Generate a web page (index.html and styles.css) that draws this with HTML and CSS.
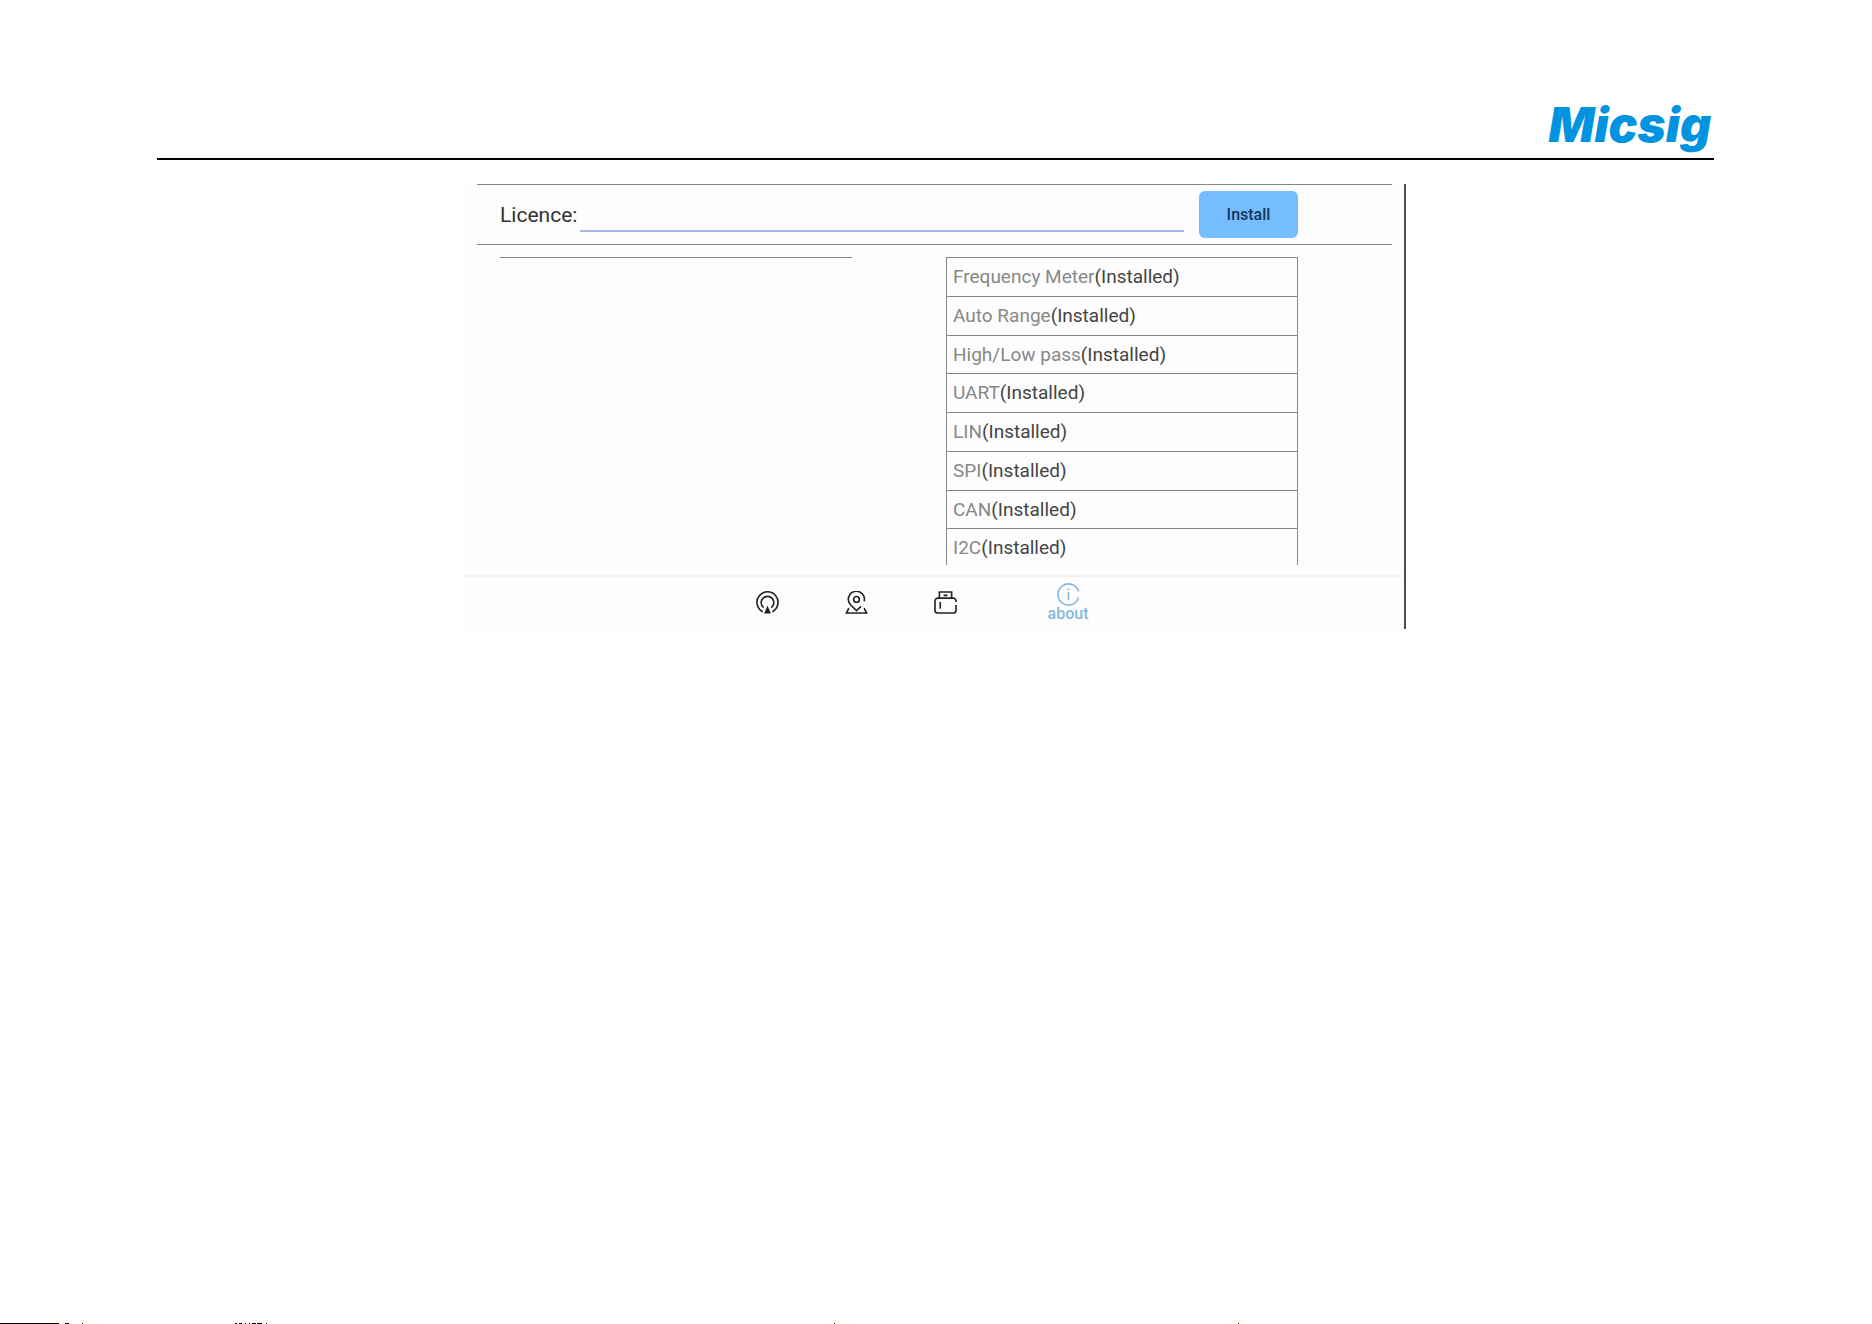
FILE: index.html
```
<!DOCTYPE html>
<html lang="en">
<head>
  <meta charset="UTF-8" />
  <title>Micsig | Licence</title>
  <meta name="viewport" content="width=device-width, initial-scale=1.0" />
  <link rel="stylesheet" href="styles.css">
</head>
<body>
  <div class="page">
    <header>
      <span class="logo">Micsig</span>
    </header>

    <main class="panel">
      <form class="licence">
        <label for="licence">Licence:</label>
        <input type="text" id="licence">
        <button type="button" class="install">Install</button>
      </form>

      <div class="columns">
        <div class="details"></div>
        <ul class="options">
          <li>Frequency Meter<span>(Installed)</span></li>
          <li>Auto Range<span>(Installed)</span></li>
          <li>High/Low pass<span>(Installed)</span></li>
          <li>UART<span>(Installed)</span></li>
          <li>LIN<span>(Installed)</span></li>
          <li>SPI<span>(Installed)</span></li>
          <li>CAN<span>(Installed)</span></li>
          <li>I2C<span>(Installed)</span></li>
        </ul>
      </div>

      <nav class="tabs">
        <button type="button" aria-label="Signal">
          <svg viewBox="0 0 24 24">
            <path d="M7 21.6A11 11 0 1 1 17 21.6" />
            <path d="M8 17.4A6.6 6.6 0 1 1 16 17.4" />
            <path d="M12 15.5L15.6 23.5H8.4z" fill="currentColor" stroke="none" />
          </svg>
        </button>
        <button type="button" aria-label="Location">
          <svg viewBox="0 0 24 24">
            <path d="M16.8 16L12 20.5L6 14.6A8.4 8.4 0 1 1 20 10.8" />
            <circle cx="12" cy="8.8" r="3" />
            <path d="M4 17.8L1.5 23H22.5L20 17.8" />
          </svg>
        </button>
        <button type="button" aria-label="Storage">
          <svg viewBox="0 0 24 24">
            <path d="M5.6 7.5V1H18.4V7.5M10 4.6H14" />
            <path d="M23 11.5V10.5A3 3 0 0 0 20 7.5H4A3 3 0 0 0 1 10.5V20A3 3 0 0 0 4 23H20A3 3 0 0 0 23 20V14.5M6.5 11.5V18.5" />
          </svg>
        </button>
        <button type="button" class="active">
          <svg viewBox="0 0 24 24">
            <path d="M22.6 9A11 11 0 1 0 22.6 15" />
            <path d="M12 5.5V7.5M12 9.5V18" />
          </svg>
          about
        </button>
      </nav>
    </main>
  </div>

  <footer>
    <svg class="edge" width="1240" height="1">
      <path d="M0 .5H58M65 .5H69M235 .5H237M239 .5H242M245 .5H246M249 .5H250M252 .5H256M257 .5H262" stroke="#000" />
      <path d="M58 .5H59M82 .5H83M266 .5H267M834 .5H835M1238 .5H1239" stroke="#00c" />
    </svg>
  </footer>
</body>
</html>
```
FILE: styles.css
```
* {
  box-sizing: border-box;
}
body {
  font-family: Roboto, "Liberation Sans", sans-serif;
  margin: 0;
  min-height: 100vh;
  display: flex;
  flex-direction: column;
  background-color: #fff;
  color: #333;
}
.page {
  margin: 0 158px 0 157px;
}
header {
  margin-bottom: 24px;
  padding: 94px 3px 2px 0;
  border-bottom: 2px solid #000;
  text-align: right;
}
.logo {
  display: block;
  font-family: Inter, "Liberation Sans", sans-serif;
  font-size: 48px;
  font-weight: 900;
  font-style: italic;
  line-height: 62px;
  color: #0093e0;
}

.panel {
  max-width: 941px;
  margin: 0 auto;
  background-color: #fdfdfd;
  border-right: 2px solid #4d4d4d;
}
.licence {
  display: flex;
  align-items: center;
  height: 61px;
  margin: 0 12px;
  padding: 0 94px 0 23px;
  border-top: 1px solid #888;
  border-bottom: 1px solid #888;
}
.licence label {
  font-size: 21px;
}
.licence input {
  flex: 1;
  min-width: 0;
  height: 34px;
  margin: 0 15px 0 3px;
  padding: 0 4px;
  font: inherit;
  font-size: 21px;
  background: none;
  border: 0;
  border-bottom: 2px solid #a3b8e6;
  outline: none;
}
.install {
  width: 99px;
  height: 47px;
  padding: 0;
  border: 0;
  border-radius: 6px;
  background-color: #76bdff;
  color: #153558;
  font: inherit;
  font-size: 16px;
  font-weight: 500;
}

/* the option list runs on below the fold of the panel */
.columns {
  display: flex;
  justify-content: space-between;
  align-items: flex-start;
  height: 308px;
  margin: 12px 106px 10px 35px;
  overflow: hidden;
}
.details {
  width: 352px;
  border-top: 1px solid #888;
}
.options {
  display: flex;
  flex-direction: column;
  width: 352px;
  height: 311px;
  margin: 0;
  padding: 0;
  list-style: none;
  border: 1px solid #888;
  border-bottom: 0;
}
.options li {
  flex: 1;
  padding-left: 6px;
  border-bottom: 1px solid #888;
  font-size: 19px;
  line-height: 37px;
  color: #888;
}
.options span {
  color: #444;
}

.tabs {
  display: flex;
  justify-content: center;
  height: 54px;
  padding-bottom: 2px;
  border-top: 2px solid #f3f3f3;
}
.tabs button {
  display: flex;
  flex-direction: column;
  align-items: center;
  justify-content: center;
  width: 89px;
  padding: 0;
  border: 0;
  background: none;
  color: #222;
  font: inherit;
  font-size: 16px;
  font-weight: 500;
  line-height: 16px;
}
.tabs svg {
  width: 23px;
  height: 23px;
  fill: none;
  stroke: currentColor;
  stroke-width: 1.7;
}
.tabs .active {
  width: 156px;
  color: #86b8e2;
}

footer {
  margin-top: auto;
  overflow: hidden;
}
.edge {
  display: block;
}
```
